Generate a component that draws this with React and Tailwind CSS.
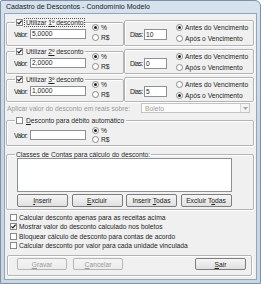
import React from "react";

function Check({ checked }) {
  return (
    <span className="inline-flex w-[7px] h-[7px] border border-[#8a8a8a] bg-white items-center justify-center shrink-0">
      {checked && (
        <svg width="5" height="5" viewBox="0 0 5 5">
          <path d="M0.4 2.4 L1.9 3.9 L4.6 0.7" fill="none" stroke="#1f1f1f" strokeWidth="1.2" />
        </svg>
      )}
    </span>
  );
}

function Radio({ checked }) {
  return (
    <span className="inline-flex w-[7px] h-[7px] rounded-full border border-[#8a8a8a] bg-white items-center justify-center shrink-0">
      {checked && <span className="w-[3px] h-[3px] rounded-full bg-[#1f1f1f]" />}
    </span>
  );
}

function Btn({ children, disabled, w = "w-[50px]" }) {
  return (
    <div
      className={
        "h-full rounded-[2px] border flex items-center justify-center whitespace-nowrap bg-gradient-to-b " +
        w +
        (disabled
          ? " border-[#b5b5b5] from-[#f4f4f4] to-[#ececec] text-[#9a9a9a]"
          : " border-[#7d7d7d] from-[#f6f6f6] to-[#e0e0e0] text-[#222]")
      }
    >
      <span>{children}</span>
    </div>
  );
}

const fs = "border border-[#b4b4b4] rounded-[2px] shadow-[inset_1px_1px_0_#ffffff,1px_1px_0_#ffffff]";

function DescRow({ n, valor, dias, apos, focus, top, h }) {
  return (
    <div className={"flex " + top + " " + h}>
      <fieldset className={fs + " ml-[1px] w-[118px] h-full"}>
        <legend className="ml-[8px] px-[1px] flex items-center gap-[2px] h-[7px] leading-[7px]">
          <Check checked />
          <span className={"px-[1px] whitespace-nowrap " + (focus ? "outline outline-1 outline-dotted outline-[#555]" : "")}>
            Utilizar <span className="underline">{n}º</span> desconto
          </span>
        </legend>
        <div className="flex pl-[7px]">
          <div className="flex items-center mt-[3px] h-[10px]">
            <span className="w-[16px] tracking-[-0.6px] whitespace-nowrap">Valor:</span>
            <div className="w-[56px] h-[10px] border border-[#8b9099] bg-white pl-[1px] leading-[8px]">{valor}</div>
          </div>
          <div className="ml-[6px] -mt-[4px] flex flex-col">
            <div className="h-[10px] flex items-center gap-[2px]">
              <Radio checked />
              <span>%</span>
            </div>
            <div className="h-[10px] flex items-center gap-[2px]">
              <Radio />
              <span>R$</span>
            </div>
          </div>
        </div>
      </fieldset>
      <fieldset className={fs + " w-[130px] mt-[1px] h-[calc(100%-1px)]"}>
        <div className="flex pl-[5px]">
          <div className="flex items-center mt-[8px] h-[11px]">
            <span className="w-[14px] tracking-[-0.5px] whitespace-nowrap">Dias:</span>
            <div className="w-[23px] h-[11px] border border-[#8b9099] bg-white pl-[1px] leading-[9px]">{dias}</div>
          </div>
          <div className="ml-[9px] mt-[1px] flex flex-col">
            <div className="h-[11px] flex items-center gap-[2px] whitespace-nowrap">
              <Radio checked={!apos} />
              <span>Antes do Vencimento</span>
            </div>
            <div className="h-[11px] flex items-center gap-[2px] whitespace-nowrap">
              <Radio checked={apos} />
              <span>Após o Vencimento</span>
            </div>
          </div>
        </div>
      </fieldset>
    </div>
  );
}

export default function App() {
  return (
    <div className="w-[261px] h-[284px] bg-white overflow-hidden font-['Liberation_Sans',Arial,sans-serif] text-[6.7px] leading-[7px] text-[#1e1e1e]">
      <div className="w-full h-full rounded-tr-[6px] rounded-tl-[2px] border border-[#7f90a3] bg-gradient-to-b from-[#d6e2ee] via-[#c6d4e3] to-[#c9d6e4] flex flex-col px-[3px] pb-[3px]">
        <div className="h-[12px] flex items-center pl-[2px] text-[7.1px] text-[#1a1a1a] whitespace-nowrap">
          Cadastro de Descontos - Condomínio Modelo
        </div>
        <div className="flex-1 bg-[#f0f0f0] border border-[#97a6b6] flex flex-col">
          <DescRow n={1} valor="5,0000" dias="10" focus top="mt-[5px]" h="h-[27px]" />
          <DescRow n={2} valor="2,0000" dias="0" top="mt-[2px]" h="h-[26px]" />
          <DescRow n={3} valor="1,0000" dias="5" apos top="mt-[2px]" h="h-[26px]" />

          <div className="mt-[1px] h-[10px] flex items-center ml-[2px]">
            <span className="w-[134px] text-[#9a9a9a] whitespace-nowrap">Aplicar valor do desconto em reais sobre:</span>
            <div className="w-[109px] h-[10px] border border-[#c3c3c3] bg-[#fbfbfb] flex items-center">
              <span className="pl-[3px] flex-1 text-[#a0a0a0]">Boleto</span>
              <div className="w-[9px] h-full border-l border-[#d8d8d8] bg-[#f3f3f3] flex items-center justify-center">
                <svg width="5" height="3" viewBox="0 0 5 3">
                  <path d="M0 0 L5 0 L2.5 3 Z" fill="#a5a5a5" />
                </svg>
              </div>
            </div>
          </div>

          <fieldset className={fs + " mt-[4px] ml-[1px] w-[248px] h-[29px]"}>
            <legend className="ml-[8px] px-[1px] flex items-center gap-[2px] h-[7px] leading-[7px]">
              <Check />
              <span className="px-[1px] whitespace-nowrap">
                <span className="underline">D</span>esconto para débito automático
              </span>
            </legend>
            <div className="flex pl-[7px]">
              <div className="flex items-center mt-[6px] h-[10px]">
                <span className="w-[16px] tracking-[-0.6px] whitespace-nowrap">Valor:</span>
                <div className="w-[56px] h-[10px] border border-[#8b9099] bg-white" />
              </div>
              <div className="ml-[6px] mt-[2px] flex flex-col">
                <div className="h-[9px] flex items-center gap-[2px]">
                  <Radio checked />
                  <span>%</span>
                </div>
                <div className="h-[9px] flex items-center gap-[2px]">
                  <Radio />
                  <span>R$</span>
                </div>
              </div>
            </div>
          </fieldset>

          <fieldset className={fs + " mt-[5px] ml-[1px] w-[248px] h-[59px]"}>
            <legend className="ml-[8px] px-[1px] h-[7px] leading-[7px] whitespace-nowrap">Classes de Contas para cálculo do desconto:</legend>
            <div className="pl-[10px]">
              <div className="w-[215px] h-[34px] border border-[#8b9099] bg-white" />
              <div className="mt-[2px] h-[13px] flex gap-[3.5px]">
                <Btn w="w-[51px]"><span className="underline">I</span>nserir</Btn>
                <Btn w="w-[51px]"><span className="underline">E</span>xcluir</Btn>
                <Btn w="w-[51px]">Inserir{" "}<span className="underline">T</span>odas</Btn>
                <Btn w="w-[51px]">Excluir{" "}T<span className="underline">o</span>das</Btn>
              </div>
            </div>
          </fieldset>

          <div className="mt-[3px] pl-[5px] flex flex-col">
            {[
              ["Calcular desconto apenas para as receitas acima", false],
              ["Mostrar valor do desconto calculado nos boletos", true],
              ["Bloquear cálculo de desconto para contas de acordo", false],
              ["Calcular desconto por valor para cada unidade vinculada", false],
            ].map(([t, c]) => (
              <div key={t} className="h-[9.33px] flex items-center gap-[2px] whitespace-nowrap">
                <Check checked={c} />
                <span>{t}</span>
              </div>
            ))}
          </div>

          <fieldset className={fs + " mt-[5px] ml-[2px] w-[245px] h-[21px]"}>
            <div className="flex pl-[9px] pr-[5px] mt-[2px] h-[12px]">
              <Btn disabled><span className="underline">G</span>ravar</Btn>
              <div className="ml-[6px] h-full">
                <Btn disabled><span className="underline">C</span>ancelar</Btn>
              </div>
              <div className="ml-auto h-full">
                <Btn w="w-[51px]"><span className="underline">S</span>air</Btn>
              </div>
            </div>
          </fieldset>
        </div>
      </div>
    </div>
  );
}
